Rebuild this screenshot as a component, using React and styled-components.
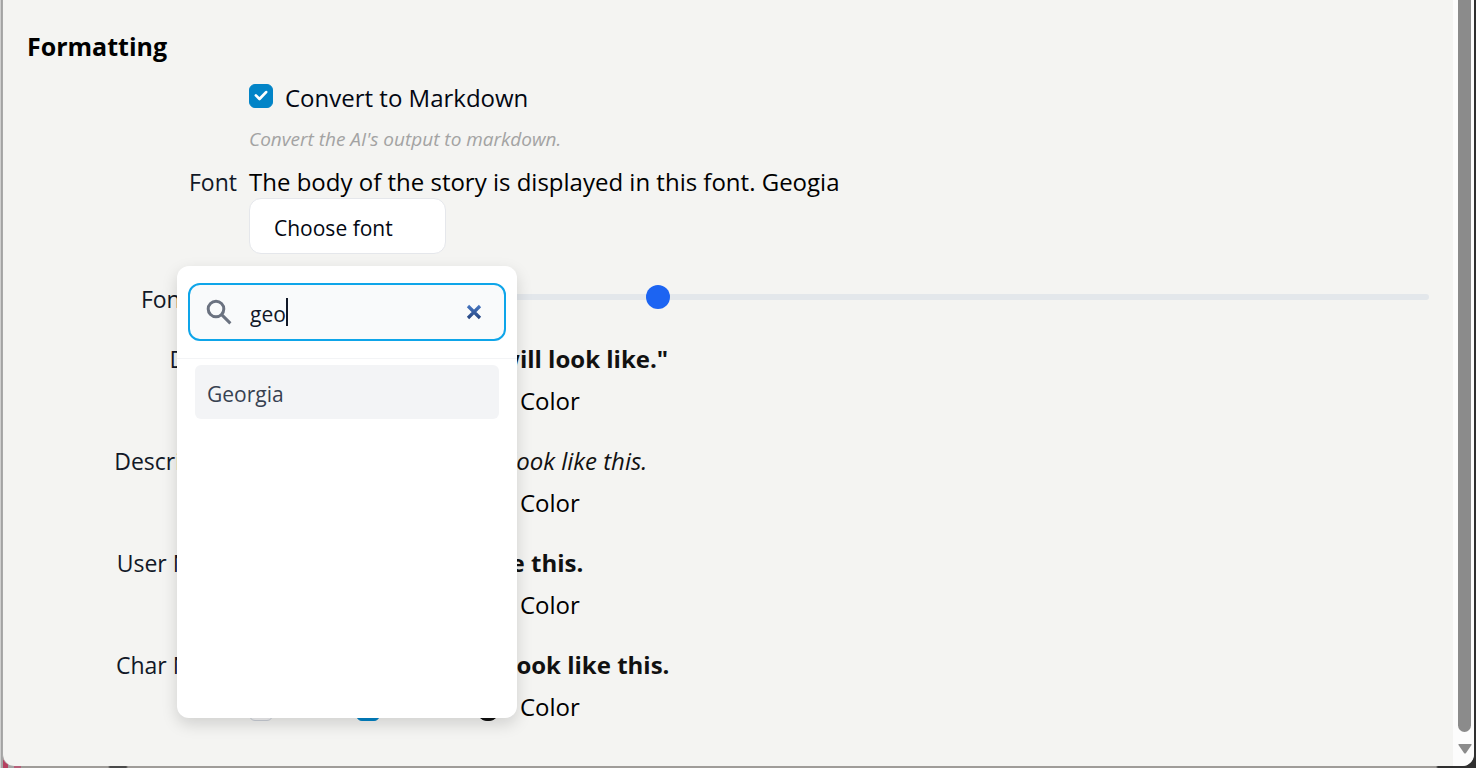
import React, { useState } from "react";
import styled, { createGlobalStyle, css } from "styled-components";

const GlobalStyle = createGlobalStyle`
  *, *::before, *::after { box-sizing: border-box; }
  html, body { margin: 0; }
  body {
    color: #030712;
    font-family: "Malgun Gothic", "Open Sans", "Noto Sans", sans-serif;
    font-size: 24px;
    line-height: 36px;
  }
  button, input { font: inherit; color: inherit; }
`;

const Page = styled.div`
  min-height: 100vh;
  display: flex;
  padding: 0 2px 2px 2px;
  background: linear-gradient(90deg, #cfcfcf 0 1px, #a3a3a3 1px 3px, #b5405f 3px 8px, #a3a3a3 8px 14px, #b5607a 14px 21px, #9f9c99 21px 108px, #4a4a4a 110px 126px, #9f9c99 128px calc(100% - 40px), #2f2f2f calc(100% - 38px));
`;

const Dialog = styled.div`
  flex: 1;
  display: flex;
  overflow: hidden;
  border-left: 1px solid #a9a9a9;
  border-radius: 0 0 12px 12px;
  background: #f4f4f2;
`;

const Content = styled.main`
  flex: 1;
  min-width: 0;
  padding: 26px 24px 8px;
`;

const Title = styled.h2`
  margin: 0 0 12px;
  font-size: 25px;
  line-height: 40px;
  font-weight: 700;
  color: #000;
`;

const Row = styled.div`
  display: flex;
  gap: 12px;
  margin-bottom: ${(p) => p.$gap || 24}px;
`;

const line = css`
  padding-top: 4px;
  line-height: 32px;
`;

const labelStyle = css`
  ${line}
  flex: 0 0 210px;
  font-size: 23px;
  text-align: right;
  color: #111827;
`;
const RowLabel = styled.span`${labelStyle}`;
const SliderLabel = styled.label`${labelStyle}`;

const Field = styled.div`
  flex: 1;
  min-width: 0;
  display: flex;
  flex-direction: column;
  gap: ${(p) => p.$gap || 0}px;
`;

const Text = styled.p`
  ${line}
  margin: 0;
  color: #000;
`;

const Sample = styled.p`
  ${line}
  margin: 0;
  color: #111;
  font-weight: ${(p) => (p.$bold ? 700 : 400)};
  font-style: ${(p) => (p.$italic ? "italic" : "normal")};
`;

const Hint = styled.p`
  margin: 0;
  padding-top: 8px;
  font-size: 19px;
  line-height: 22px;
  font-style: italic;
  color: #a3a3a3;
`;

const Check = styled.label`
  display: flex;
  align-items: center;
  gap: 12px;
  width: ${(p) => (p.$width ? p.$width + "px" : "auto")};
`;

const Caption = styled.span`${line}`;

const tick = (
  <svg viewBox="0 0 16 16" width="24" height="24" fill="none" aria-hidden="true">
    <path d="M4.6 7.6 7 10 11.4 5.4" stroke="#fff" strokeWidth="1.8" strokeLinejoin="round" strokeLinecap="round" />
  </svg>
);

const BoxWrap = styled.span`
  flex: none;
  display: grid;
  width: 24px;
  height: 24px;
  & > * { grid-area: 1 / 1; }
  svg { pointer-events: none; }
`;

const Box = styled.input`
  appearance: none;
  margin: 0;
  width: 24px;
  height: 24px;
  border: 1px solid #cbd0d8;
  border-radius: 6px;
  background: #f4f4f5;
  &:checked { border-color: #0284c7; background: #0284c7; }
`;

const Options = styled.div`
  display: flex;
  height: 36px;
`;

const Swatch = styled.label`
  display: flex;
  gap: 20px;
  color: #000;
`;

const SwatchInput = styled.input`
  appearance: none;
  width: 24px;
  height: 24px;
  margin: 10px 0 0;
  padding: 0;
  border: 0;
  border-radius: 50%;
  background: #111;
  &::-webkit-color-swatch-wrapper { padding: 0; }
  &::-webkit-color-swatch { border: 0; border-radius: 50%; }
`;

const OptionCheck = styled(Check)`
  align-items: flex-start;
  ${BoxWrap} { margin-top: 10px; }
`;

const Slider = styled.input`
  appearance: none;
  width: 100%;
  height: 36px;
  margin: 0;
  background: transparent;
  &::-webkit-slider-runnable-track {
    height: 6px;
    border-radius: 3px;
    background: #e3e7eb;
  }
  &::-webkit-slider-thumb {
    appearance: none;
    width: 24px;
    height: 24px;
    margin-top: -9px;
    border-radius: 50%;
    background: #1c64f2;
  }
`;

const Picker = styled.div`
  position: relative;
  width: 197px;
`;

const PickerButton = styled.button`
  width: 100%;
  height: 56px;
  padding: 4px 24px 0;
  border: 1px solid #e5e7eb;
  border-radius: 12px;
  background: #fff;
  text-align: left;
  font-size: 21px;
  line-height: 30px;
  display: block;
`;

const Menu = styled.div`
  position: absolute;
  z-index: 2;
  top: 68px;
  left: -72px;
  width: 340px;
  height: 452px;
  border-radius: 12px;
  background: #fff;
  box-shadow: 0 6px 16px rgba(0, 0, 0, 0.15);
`;

const SearchArea = styled.div`
  padding: 17px 11px;
  border-bottom: 1px solid #f3f4f6;
`;

const SearchBox = styled.div`
  display: flex;
  align-items: center;
  height: 58px;
  padding: 0 22px 0 16px;
  border: 2px solid #0ea5e9;
  border-radius: 12px;
  background: #f9fafb;
`;

const SearchInput = styled.input`
  field-sizing: content;
  margin: 4px 0 0 18px;
  padding: 0;
  border: 0;
  outline: 0;
  background: transparent;
  font-size: 21px;
  line-height: 30px;
  color: #111827;
  caret-color: transparent;
`;

const Caret = styled.span`
  width: 2px;
  height: 28px;
  background: #111827;
`;

const Clear = styled.button`
  display: flex;
  margin-left: auto;
  padding: 0;
  border: 0;
  background: none;
`;

const List = styled.ul`
  margin: 0;
  padding: 6px 18px;
  list-style: none;
`;

const Item = styled.button`
  width: 100%;
  height: 54px;
  padding: 4px 12px 0;
  border: 0;
  border-radius: 6px;
  background: #f3f4f6;
  text-align: left;
  font-size: 21px;
  line-height: 30px;
  color: #374151;
`;

const Scrollbar = styled.div`
  flex: none;
  width: 21px;
  display: flex;
  flex-direction: column;
  background: #fcfcfc;
`;

const Thumb = styled.div`
  flex: 1;
  width: 13px;
  margin-left: 5px;
  border-radius: 0 0 7px 7px;
  background: #8b8b8b;
`;

const Arrow = styled.svg`
  display: block;
  margin: 12px 0 12px 5px;
`;

function Checkbox({ id, checked }) {
  return (
    <BoxWrap>
      <Box type="checkbox" id={id} defaultChecked={checked} />
      {checked && tick}
    </BoxWrap>
  );
}

const styles = [
  { key: "dialog", label: "Dialog", sample: "\"This is what dialogs will look like.\"", bold: true },
  { key: "description", label: "Description", sample: "Descriptions in the story look like this.", italic: true },
  { key: "user", label: "User Name", sample: "User style will look like this.", bold: true },
  { key: "char", label: "Char Name", sample: "Character names can look like this.", bold: true },
];

export default function App() {
  const [query, setQuery] = useState("geo");
  return (
    <Page>
      <GlobalStyle />
      <Dialog>
        <Content>
          <Title>Formatting</Title>
          <Row $gap={12}>
            <RowLabel />
            <Field $gap={6}>
              <Check htmlFor="markdown">
                <Checkbox id="markdown" checked />
                <Caption>Convert to Markdown</Caption>
              </Check>
              <Hint>Convert the AI's output to markdown.</Hint>
            </Field>
          </Row>
          <Row $gap={25}>
            <RowLabel>Font</RowLabel>
            <Field>
              <Text>The body of the story is displayed in this font. Geogia</Text>
              <Picker>
                <PickerButton type="button">Choose font</PickerButton>
                <Menu>
                  <SearchArea>
                    <SearchBox>
                      <svg width="26" height="26" viewBox="0 0 26 26" fill="none" stroke="#6b7280" strokeWidth="3" aria-hidden="true">
                        <circle cx="10" cy="10" r="7.8" />
                        <path d="M15.6 15.6 24.4 24.4" />
                      </svg>
                      <SearchInput aria-label="Search fonts" value={query} onChange={(e) => setQuery(e.target.value)} />
                      <Caret />
                      <Clear type="button" aria-label="Clear" onClick={() => setQuery("")}>
                        <svg width="16" height="16" viewBox="0 0 16 16" aria-hidden="true">
                          <defs>
                            <linearGradient id="clear" x1="0" y1="0" x2="0" y2="16" gradientUnits="userSpaceOnUse">
                              <stop offset="0" stopColor="#4a7bc8" />
                              <stop offset="1" stopColor="#23407a" />
                            </linearGradient>
                          </defs>
                          <path d="M2 2 14 14M14 2 2 14" stroke="url(#clear)" strokeWidth="3.2" />
                        </svg>
                      </Clear>
                    </SearchBox>
                  </SearchArea>
                  <List>
                    <li><Item type="button">Georgia</Item></li>
                  </List>
                </Menu>
              </Picker>
            </Field>
          </Row>
          <Row>
            <SliderLabel htmlFor="size">Font Size</SliderLabel>
            <Field>
              <Slider id="size" type="range" min="8" max="40" defaultValue="19" />
            </Field>
          </Row>
          {styles.map((s) => (
            <Row key={s.key}>
              <RowLabel>{s.label}</RowLabel>
              <Field $gap={6}>
                <Sample $bold={s.bold} $italic={s.italic}>{s.sample}</Sample>
                <Options>
                  <OptionCheck $width={107} htmlFor={s.key + "-i"}>
                    <Checkbox id={s.key + "-i"} />
                    <Caption>Italic</Caption>
                  </OptionCheck>
                  <OptionCheck $width={120} htmlFor={s.key + "-b"}>
                    <Checkbox id={s.key + "-b"} checked />
                    <Caption>Bold</Caption>
                  </OptionCheck>
                  <Swatch>
                    <SwatchInput type="color" defaultValue="#111111" />
                    <Caption>Color</Caption>
                  </Swatch>
                </Options>
              </Field>
            </Row>
          ))}
        </Content>
        <Scrollbar>
          <Thumb />
          <Arrow width="14" height="10" viewBox="0 0 14 10" aria-hidden="true">
            <path d="M1 0h12q1 0 .5 1L8 9q-1 1-2 0L.5 1Q0 0 1 0Z" fill="#8b8b8b" />
          </Arrow>
        </Scrollbar>
      </Dialog>
    </Page>
  );
}
